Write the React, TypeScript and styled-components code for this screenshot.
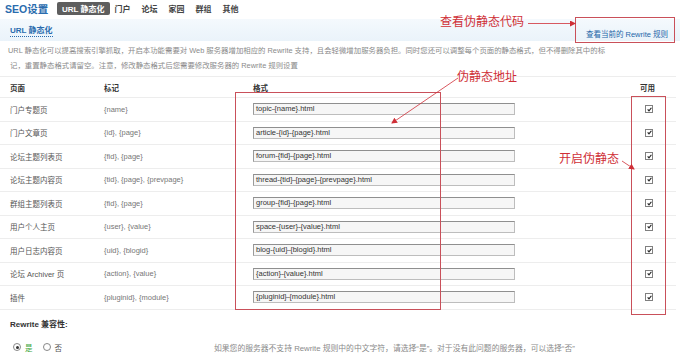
import React from 'react';
import styled, { createGlobalStyle } from 'styled-components';

const GlobalStyle = createGlobalStyle`
  body {
    margin: 0;
    background: #fff;
    font-family: "Liberation Sans", "Noto Sans CJK SC", sans-serif;
  }
`;

const colors = {
  blue: '#2a6cae',
  link: '#2366a8',
  text: '#555',
  gray: '#8a8a8a',
  line: '#ededed',
  red: '#cf2f37',
  redBox: '#c9505a',
};

const Page = styled.div`
  position: relative;
  width: 680px;
  height: 361px;
  overflow: hidden;
`;

const TopNav = styled.div`
  display: flex;
  align-items: center;
  height: 17px;
  padding: 0 0 0 5px;
`;

const Logo = styled.div`
  font-size: 10.5px;
  font-weight: bold;
  color: ${colors.blue};
  width: 52px;
`;

const Tab = styled.div<{ $active?: boolean }>`
  font-size: 8px;
  font-weight: bold;
  padding: 1px 5px;
  margin-right: ${p => (p.$active ? '0' : '1px')};
  border-radius: 2px;
  color: ${p => (p.$active ? '#fff' : '#444')};
  background: ${p => (p.$active ? '#5e5e5e' : 'transparent')};
`;

const SectionBar = styled.div`
  display: flex;
  align-items: center;
  justify-content: space-between;
  height: 22px;
  margin-top: 2px;
  padding: 0 10px;
  background: linear-gradient(#f4f9fd, #eaf3fa);
`;

const SectionTitle = styled.span`
  font-size: 8px;
  font-weight: bold;
  color: ${colors.blue};
  padding-bottom: 1px;
  border-bottom: 1px dotted ${colors.blue};
`;

const RuleLink = styled.span`
  font-size: 7.5px;
  color: ${colors.link};
  margin-top: 6px;
  margin-right: 2px;
`;

const Description = styled.p`
  margin: 0;
  padding: 3px 8px 0 8px;
  font-size: 7.4px;
  line-height: 14.5px;
  color: ${colors.gray};
`;

const Table = styled.div`
  margin-top: 3px;
  width: 676px;
`;

const Row = styled.div<{ $head?: boolean }>`
  display: grid;
  grid-template-columns: 94px 149px 387px 1fr;
  align-items: center;
  height: ${p => (p.$head ? '21px' : '23.5px')};
  box-sizing: border-box;
  padding-left: 10px;
  border-top: 1px solid ${colors.line};
  font-size: 7.5px;
  color: ${p => (p.$head ? '#333' : colors.text)};
  font-weight: ${p => (p.$head ? 'bold' : 'normal')};
`;

const Token = styled.span`
  color: #777;
`;

const FormatInput = styled.div`
  width: 256px;
  height: 10px;
  line-height: 10px;
  padding: 0 2px;
  border: 1px solid #bdbdbd;
  border-top-color: #8f8f8f;
  border-left-color: #9a9a9a;
  background: #f6f6f6;
  font-size: 7.5px;
  color: #333;
`;

const Check = styled.span`
  display: inline-flex;
  align-items: center;
  justify-content: center;
  width: 6px;
  height: 6px;
  margin-left: 5px;
  border: 1px solid #808080;
  background: #fff;
`;

const Compat = styled.div`
  padding: 8px 10px 0 10px;
  font-size: 8px;
  font-weight: bold;
  color: #333;
`;

const RadioRow = styled.div`
  display: flex;
  align-items: center;
  padding: 13px 0 0 13px;
  font-size: 7.5px;
`;

const Radio = styled.span<{ $on?: boolean }>`
  display: inline-flex;
  align-items: center;
  justify-content: center;
  width: 6px;
  height: 6px;
  border: 1px solid #888;
  border-radius: 50%;
  margin-right: 4px;
  &::after {
    content: '';
    width: 3px;
    height: 3px;
    border-radius: 50%;
    background: ${p => (p.$on ? '#333' : 'transparent')};
  }
`;

const RadioLabel = styled.span<{ $on?: boolean }>`
  color: ${p => (p.$on ? '#3aa53a' : '#555')};
  margin-right: 10px;
`;

const Hint = styled.span`
  margin-left: 142px;
  font-size: 7.8px;
  color: ${colors.gray};
`;

const RedBox = styled.div`
  position: absolute;
  border: 1px solid ${colors.redBox};
  pointer-events: none;
`;

const Note = styled.div`
  position: absolute;
  font-family: "Noto Sans CJK SC", sans-serif;
  font-size: 12px;
  line-height: 1;
  color: ${colors.red};
  white-space: nowrap;
`;

const Arrows = styled.svg`
  position: absolute;
  left: 0;
  top: 0;
  pointer-events: none;
`;

const rows = [
  { page: '门户专题页', marks: '{name}', format: 'topic-{name}.html' },
  { page: '门户文章页', marks: '{id}, {page}', format: 'article-{id}-{page}.html' },
  { page: '论坛主题列表页', marks: '{fid}, {page}', format: 'forum-{fid}-{page}.html' },
  { page: '论坛主题内容页', marks: '{tid}, {page}, {prevpage}', format: 'thread-{tid}-{page}-{prevpage}.html' },
  { page: '群组主题列表页', marks: '{fid}, {page}', format: 'group-{fid}-{page}.html' },
  { page: '用户个人主页', marks: '{user}, {value}', format: 'space-{user}-{value}.html' },
  { page: '用户日志内容页', marks: '{uid}, {blogid}', format: 'blog-{uid}-{blogid}.html' },
  { page: '论坛 Archiver 页', marks: '{action}, {value}', format: '{action}-{value}.html' },
  { page: '插件', marks: '{pluginid}, {module}', format: '{pluginid}-{module}.html' },
];

const CheckMark = () => (
  <svg width="5" height="5" viewBox="0 0 6 6">
    <path d="M0.8 2.8 L2.4 4.6 L5.3 0.9" fill="none" stroke="#222" strokeWidth="1.4" />
  </svg>
);

const App = () => {
  return (
    <Page>
      <GlobalStyle />
      <TopNav>
        <Logo>SEO设置</Logo>
        <Tab $active>URL 静态化</Tab>
        <Tab>门户</Tab>
        <Tab>论坛</Tab>
        <Tab>家园</Tab>
        <Tab>群组</Tab>
        <Tab>其他</Tab>
      </TopNav>

      <SectionBar>
        <SectionTitle>URL 静态化</SectionTitle>
        <RuleLink>查看当前的 Rewrite 规则</RuleLink>
      </SectionBar>

      <Description>
        URL 静态化可以提高搜索引擎抓取，开启本功能需要对 Web 服务器增加相应的 Rewrite 支持，且会轻微增加服务器负担。同时您还可以调整每个页面的静态格式，但不得删除其中的标
        <br />
        &nbsp;记，重置静态格式请留空。注意，修改静态格式后您需要修改服务器的 Rewrite 规则设置
      </Description>

      <Table>
        <Row $head>
          <span>页面</span>
          <span>标记</span>
          <span>格式</span>
          <span>可用</span>
        </Row>
        {rows.map(r => (
          <Row key={r.page}>
            <span>{r.page}</span>
            <Token>{r.marks}</Token>
            <FormatInput>{r.format}</FormatInput>
            <span>
              <Check>
                <CheckMark />
              </Check>
            </span>
          </Row>
        ))}
        <Row style={{ height: 0 }} />
      </Table>

      <Compat>Rewrite 兼容性:</Compat>
      <RadioRow>
        <Radio $on />
        <RadioLabel $on>是</RadioLabel>
        <Radio />
        <RadioLabel>否</RadioLabel>
        <Hint>如果您的服务器不支持 Rewrite 规则中的中文字符，请选择“是”。对于没有此问题的服务器，可以选择“否”</Hint>
      </RadioRow>

      <RedBox style={{ left: 575, top: 17, width: 98, height: 24 }} />
      <RedBox style={{ left: 235, top: 92, width: 204, height: 216 }} />
      <RedBox style={{ left: 631, top: 96, width: 33, height: 217 }} />

      <Note style={{ left: 440, top: 15 }}>查看伪静态代码</Note>
      <Note style={{ left: 457, top: 70 }}>伪静态地址</Note>
      <Note style={{ left: 559, top: 152 }}>开启伪静态</Note>

      <Arrows width="680" height="361" viewBox="0 0 680 361">
        <defs>
          <marker id="head" markerWidth="6" markerHeight="6" refX="5" refY="3" orient="auto" markerUnits="userSpaceOnUse">
            <path d="M0 0 L6 3 L0 6 Z" fill={colors.red} />
          </marker>
        </defs>
        <line x1="528" y1="23.5" x2="575" y2="23.5" stroke={colors.red} strokeWidth="0.8" markerEnd="url(#head)" />
        <line x1="458" y1="78" x2="392" y2="123" stroke={colors.red} strokeWidth="0.8" markerEnd="url(#head)" />
        <line x1="622" y1="161" x2="634" y2="169" stroke={colors.red} strokeWidth="0.8" markerEnd="url(#head)" />
      </Arrows>
    </Page>
  );
};

export default App;
